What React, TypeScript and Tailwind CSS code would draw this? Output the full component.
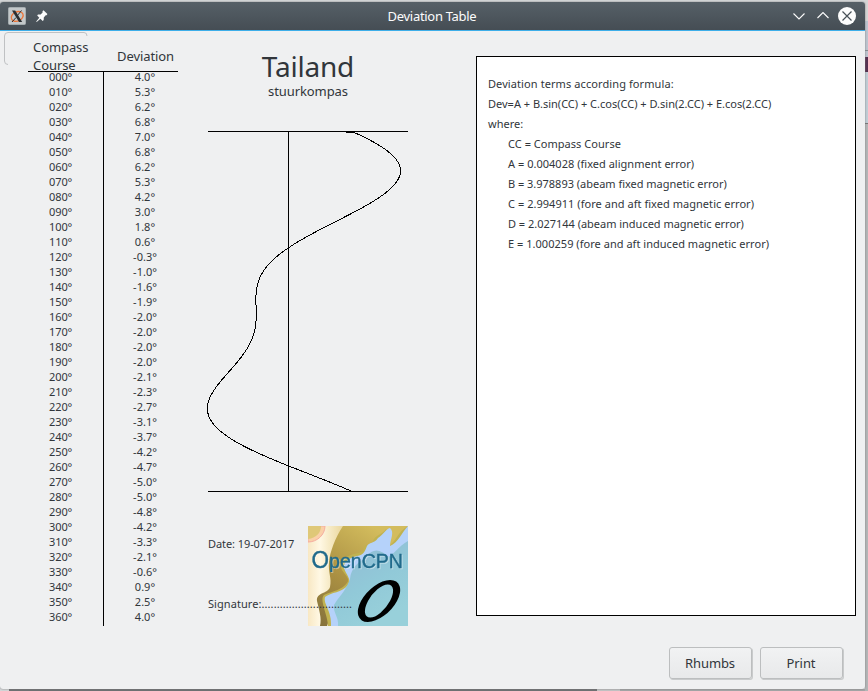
import React from "react";

const A = 0.004028;
const B = 3.978893;
const C = 2.994911;
const D = 2.027144;
const E = 1.000259;

const deviations = [
  "4.0", "5.3", "6.2", "6.8", "7.0", "6.8", "6.2", "5.3", "4.2", "3.0", "1.8", "0.6", "-0.3",
  "-1.0", "-1.6", "-1.9", "-2.0", "-2.0", "-2.0", "-2.0", "-2.1", "-2.3", "-2.7", "-3.1", "-3.7",
  "-4.2", "-4.7", "-5.0", "-5.0", "-4.8", "-4.2", "-3.3", "-2.1", "-0.6", "0.9", "2.5", "4.0",
];

function deviationAt(course: number) {
  const r = (course * Math.PI) / 180;
  return A + B * Math.sin(r) + C * Math.cos(r) + D * Math.sin(2 * r) + E * Math.cos(2 * r);
}

const curve = Array.from({ length: 361 }, (_, i) => {
  const x = 81.05 + deviationAt(i) * 16;
  return `${i === 0 ? "M" : "L"}${x.toFixed(2)} ${i + 0.5}`;
}).join("");

function TitleBar() {
  return (
    <header className="relative flex h-[29px] shrink-0 items-center justify-between rounded-t-[3px] border-b border-[#3daee9] bg-linear-to-b from-[#566067] to-[#454d54] pr-[9px] pl-[8px]">
      <div className="flex items-center gap-[10px]">
        <svg width="18" height="18" viewBox="0 0 18 18">
          <rect x="0.5" y="0.5" width="17" height="17" rx="1" fill="#c3c8ca" stroke="#a5adb0" />
          <ellipse cx="9" cy="9.5" rx="6.2" ry="4.6" fill="none" stroke="#ee7436" strokeWidth="1.3" transform="rotate(-25 9 9)" />
          <path d="M4 3.5h3.2l7 11.500h-3.200z" fill="#2b2f32" />
          <path d="M13.500 3.500 9.800 8M8 10.500l-4 4.500" stroke="#2b2f32" strokeWidth="1" />
        </svg>
        <svg width="12" height="13" viewBox="0 0 12 13" fill="#fcfcfc">
          <path d="M7.500.3 11.400 4.100 10.600 5.300 9.700 5.300 7.800 7.400 7.700 10 6.700 10.900 4.400 8.800.7 12 .2 11.500 3.300 7.700 1.200 5.600 2 4.600 4.600 4.500 6.600 2.400 6.500 1.200z" />
        </svg>
      </div>
      <h1 className="absolute inset-x-0 top-[5px] pr-px text-center text-[13px] leading-[18px] tracking-[-0.3px] text-[#fcfcfc]">Deviation Table</h1>
      <div className="flex items-center">
        <svg width="12" height="8" viewBox="0 0 12 8" fill="none" stroke="#fcfcfc" strokeWidth="1.100">
          <path d="M.5 1.500 6 7l5.500-5.500" />
        </svg>
        <svg className="ml-[12px]" width="12" height="8" viewBox="0 0 12 8" fill="none" stroke="#fcfcfc" strokeWidth="1.100">
          <path d="M.5 6 6 .5 11.500 6" />
        </svg>
        <svg className="ml-[9px]" width="18" height="18" viewBox="0 0 18 18">
          <circle cx="9" cy="9" r="9" fill="#fcfcfc" />
          <path d="M4.500 4.500l9 9M13.500 4.500l-9 9" stroke="#475057" strokeWidth="1.200" />
        </svg>
      </div>
    </header>
  );
}

function DeviationTable() {
  return (
    <section className="w-[150px] shrink-0">
      <div className="flex h-[41px] border-b border-black text-[13px] leading-[18px] tracking-[-0.08px]">
        <div className="w-[76px] pt-[7px] pl-[5px]">Compass Course</div>
        <div className="pt-[16px] pl-[13px]">Deviation</div>
      </div>
      <div className="grid grid-cols-[76px_74px] text-[11px] leading-[15px]">
        <div className="h-[554px] border-r border-black">
          <div className="-mt-[3px] pl-[21px] tracking-[-0.1px]">
            {deviations.map((_, i) => (
              <div key={i}>{String(i * 10).padStart(3, "0")}°</div>
            ))}
          </div>
        </div>
        <div className="-mt-[3px] w-[82px] text-center">
          {deviations.map((d, i) => (
            <div key={i}>{d}°</div>
          ))}
        </div>
      </div>
    </section>
  );
}

function Logo() {
  return (
    <svg className="shrink-0" width="100" height="100" viewBox="0 0 100 100">
      <defs>
        <linearGradient id="sand" x1="0" x2="1" y1="0" y2="0">
          <stop offset="0" stopColor="#f8e8c4" />
          <stop offset="0.120" stopColor="#fff8e4" />
          <stop offset="0.350" stopColor="#ead79c" />
        </linearGradient>
        <linearGradient id="land" x1="0.600" x2="0" y1="0" y2="1">
          <stop offset="0" stopColor="#d3bc5d" />
          <stop offset="0.550" stopColor="#a98f42" />
          <stop offset="1" stopColor="#84713c" />
        </linearGradient>
        <linearGradient id="sea" x1="0" x2="0.500" y1="0" y2="1">
          <stop offset="0" stopColor="#91b8d4" />
          <stop offset="0.600" stopColor="#91c9d8" />
          <stop offset="1" stopColor="#98d0da" />
        </linearGradient>
      </defs>
      <rect width="100" height="100" fill="url(#sand)" />
      <path d="M0 0H17C17 9 9 16 0 16z" fill="#fad0a8" stroke="#f5aca0" />
      <path d="M0 0H13C13 7 8 12 0 13z" fill="#dfc878" />
      <path d="M35 0H100L72 38 48 60 29 72 19 100H12C14 92 11 84 9 75 8 66 20 68 22 61 24 52 20 47 21 36 22 26 27 12 35 0z" fill="url(#land)" />
      <path d="M100 0C90 5 88 16 80 21 77 12 82 7 78 3 75 8 67 9 65 15 63 19 57 17 56 22 55 27 48 27 43 29 34 32 31 36 33 42 36 49 43 52 39 57 34 64 25 65 16 69 11 74 20 89 20 100H100z" fill="#c0b251" />
      <path d="M100 0C94 6 90 17 82 20 82 14 87 6 82 2 78 3 75 9 70 12 66 18 61 16 59 20 57 25 56 29 49 30 42 32 35 35 36 42 38 49 44 53 40 59 34 67 23 66 17 71 15 78 24 85 23 100H100z" fill="#b5d2fa" />
      <path d="M100 15C91 20 85 29 80 31 73 23 64 22 59 31 50 36 43 42 42 53 38 65 29 73 26 79 25 87 31 91 30 100H100z" fill="url(#sea)" />
      <g fontFamily="'Liberation Sans', sans-serif" fill="#206a8b" stroke="#206a8b" strokeWidth="0.400">
        <text className="[filter:drop-shadow(1px_1px_0_#ffffff66)]" x="3.500" y="42" fontSize="23.500" textLength="17.500" lengthAdjust="spacingAndGlyphs">O</text>
        <text className="[filter:drop-shadow(1px_1px_0_#ffffff66)]" x="21" y="41.500" fontSize="19.500" textLength="74" lengthAdjust="spacingAndGlyphs">penCPN</text>
      </g>
      <path transform="translate(71 75) skewX(-28)" fillRule="evenodd" d="M0-21A18 21 0 0 1 0 21 18 21 0 0 1 0-21M0-16.500A11 16.500 0 0 0 0 16.500 11 16.500 0 0 0 0-16.500" />
    </svg>
  );
}

function CurvePanel() {
  return (
    <section className="ml-[29px] w-[201px] shrink-0">
      <div className="h-[100px] text-center">
        <h2 className="pt-[16px] pl-px text-[28px] leading-[38px] tracking-[-0.2px]">Tailand</h2>
        <p className="-mt-[3px] pl-px text-[13px] leading-[18px] tracking-[-0.08px]">stuurkompas</p>
      </div>
      <svg className="block overflow-visible" width="201" height="361" viewBox="0 0 201 361" fill="none" stroke="#000" shapeRendering="crispEdges">
        <path d="M1 .5h200M1 360.500h200M81.500 0v361" />
        <path d="M139 1.500h9" />
        <path d={curve} />
      </svg>
      <div className="mt-[34px] ml-px flex w-[200px]">
        <div className="relative z-10 flex w-[100px] flex-col gap-[45px] pt-[10px] text-[11px] leading-[15px] whitespace-nowrap">
          <div className="tracking-[-0.08px]">Date: 19-07-2017</div>
          <div className="tracking-[0.07px]">Signature:..............................</div>
        </div>
        <Logo />
      </div>
    </section>
  );
}

function FormulaPanel() {
  return (
    <section className="mt-[25px] ml-[68px] h-[560px] w-[380px] shrink-0 border border-black bg-white pt-[17px] pl-[11px] text-[11px] leading-[20px] whitespace-nowrap">
      <p className="tracking-[0.09px]">Deviation terms according formula:</p>
      <p>Dev=A + B.sin(CC) + C.cos(CC) + D.sin(2.CC) + E.cos(2.CC)</p>
      <p>where:</p>
      <div className="pl-[20px]">
        <p className="tracking-[0.03px]">CC = Compass Course</p>
        <p className="tracking-[0.02px]">A = {A} (fixed alignment error)</p>
        <p className="tracking-[-0.02px]">B = {B} (abeam fixed magnetic error)</p>
        <p className="tracking-[0.04px]">C = {C} (fore and aft fixed magnetic error)</p>
        <p className="tracking-[-0.02px]">D = {D} (abeam induced magnetic error)</p>
        <p className="tracking-[0.03px]">E = {E} (fore and aft induced magnetic error)</p>
      </div>
    </section>
  );
}

function PushButton({ label }: { label: string }) {
  return (
    <button className="h-[32px] w-[83px] rounded-[3px] border border-[#bcbebf] bg-linear-to-b from-[#f1f2f3] to-[#e8e9ea] pt-px pr-px text-[13px] tracking-[-0.08px] shadow-[1px_1px_0_#c9cbcc]">
      {label}
    </button>
  );
}

export default function App() {
  return (
    <div className="relative h-[691px] w-[868px] overflow-hidden bg-[#d5d8da] pt-[2px] font-['Noto_Sans',sans-serif] text-[#31363b]">
      <div className="absolute top-[689px] left-[9px] flex h-[2px] w-[859px] bg-[#a5a6a7]">
        <div className="w-[588px] bg-[#6e7072]" />
        <div className="w-[23px] bg-[#c4c5c6]" />
      </div>
      <div className="absolute top-0 right-0 flex h-[691px] w-[3px] flex-col bg-[#b3b5b6]">
        <div className="h-[21px] bg-[#d5d5d5]" />
        <div className="h-[29px] bg-[#bdc4cf]" />
        <div className="h-px bg-[#858b90]" />
        <div className="h-[6px] bg-[#bdc4cf]" />
        <div className="h-[15px] bg-[#54304f]" />
        <div className="h-[51px] bg-[#c0cdd5]" />
        <div className="h-px bg-[#777]" />
      </div>
      <main className="relative flex h-[687px] w-[865px] flex-col rounded-[3px] bg-[#eff0f1] shadow-[0_0_2px_#777]">
        <TitleBar />
        <svg className="absolute top-[30px] left-[4px]" width="84" height="33" fill="none" stroke="#bfc1c3">
          <path d="M4 32.500Q.5 32.500.5 29V4Q.5.500 4 .500H80Q83 .500 83 4" />
        </svg>
        <div className="flex h-[595px] pl-[28px]">
          <DeviationTable />
          <CurvePanel />
          <FormulaPanel />
        </div>
        <div className="mt-[21px] flex justify-end gap-[8px] pr-[22px]">
          <PushButton label="Rhumbs" />
          <PushButton label="Print" />
        </div>
      </main>
    </div>
  );
}
